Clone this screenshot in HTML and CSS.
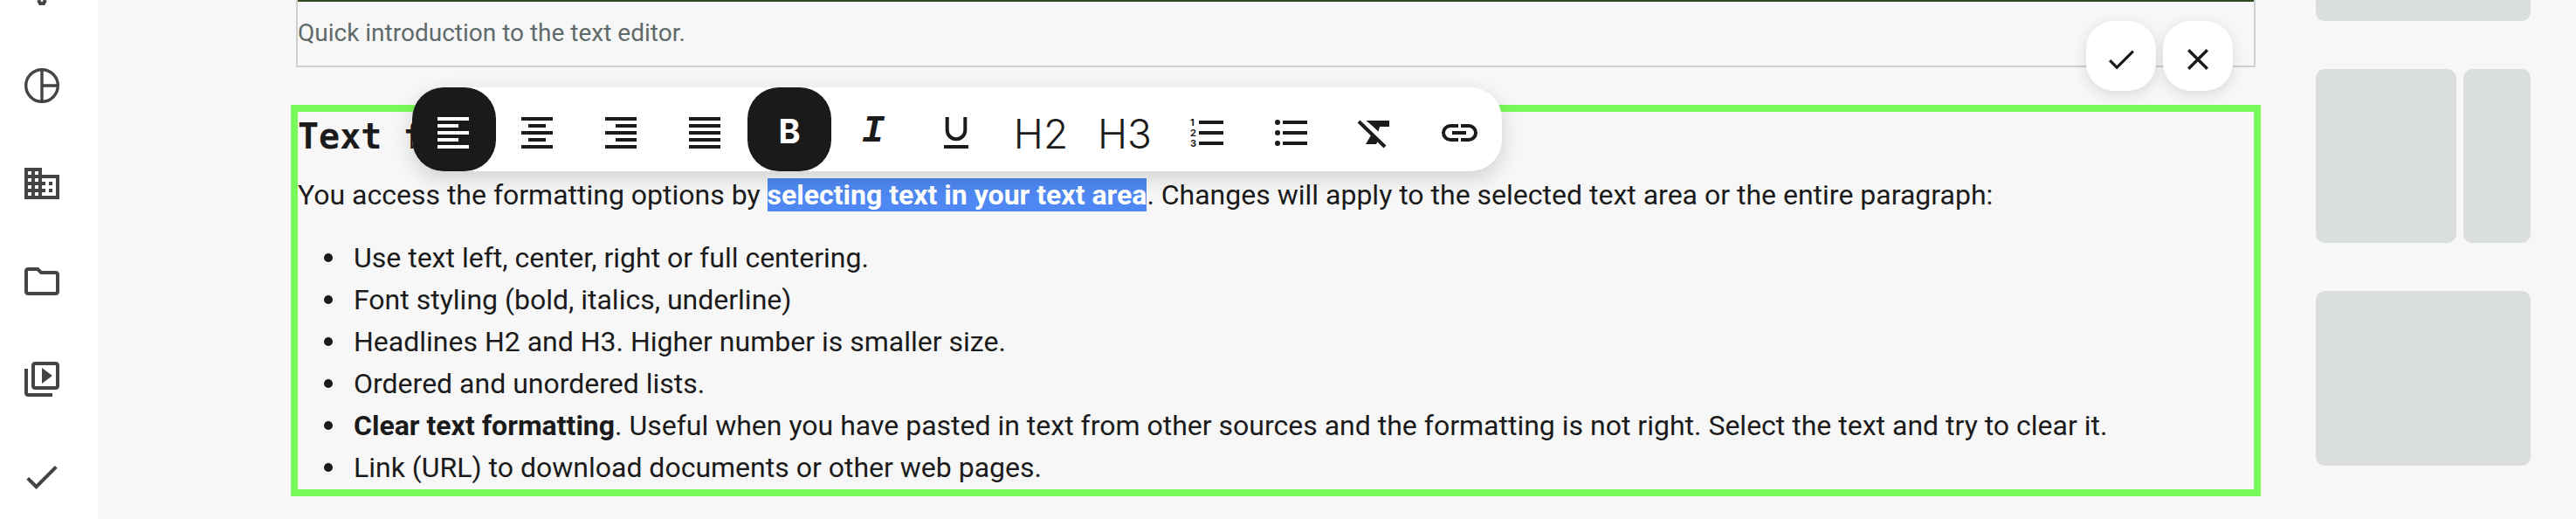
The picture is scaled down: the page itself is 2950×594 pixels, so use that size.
FILE: index.html
```html
<!DOCTYPE html>
<html lang="en">
<head>
<meta charset="utf-8">
<title>Text editor</title>
<link rel="stylesheet" href="styles.css">
</head>
<body>
<div class="app">
  <nav class="rail">
    <svg class="rail-icon top" viewBox="0 0 14 6"><path d="M3 0l2 4h4l2-4" fill="none" stroke="#444" stroke-width="4"/></svg>
    <svg class="rail-icon pie" viewBox="0 0 40 40"><circle cx="20" cy="20" r="18.300" fill="none" stroke="#444" stroke-width="3.400"/><path d="M20 2v36M20 20h18" fill="none" stroke="#444" stroke-width="3.400"/></svg>
    <svg class="rail-icon bld" viewBox="2 3 20 18"><path fill="#444" d="M12 7V3H2v18h20V7H12zM6 19H4v-2h2v2zm0-4H4v-2h2v2zm0-4H4V9h2v2zm0-4H4V5h2v2zm4 12H8v-2h2v2zm0-4H8v-2h2v2zm0-4H8V9h2v2zm0-4H8V5h2v2zm10 12h-8v-2h2v-2h-2v-2h2v-2h-2V9h8v10zm-2-8h-2v2h2v-2zm0 4h-2v2h2v-2z"/></svg>
    <svg class="rail-icon folder" viewBox="2 4 20 16"><path fill="#444" d="M9.170 6l2 2H20v10H4V6h5.170M10 4H4c-1.100 0-1.990.9-1.990 2L2 18c0 1.100.9 2 2 2h16c1.100 0 2-.9 2-2V8c0-1.100-.9-2-2-2h-8l-2-2z"/></svg>
    <svg class="rail-icon media" viewBox="2 2 20 20"><path fill="#444" d="M4 6H2v14c0 1.100.9 2 2 2h14v-2H4V6zm16-4H8c-1.100 0-2 .9-2 2v12c0 1.100.9 2 2 2h12c1.100 0 2-.9 2-2V4c0-1.100-.9-2-2-2zm0 14H8V4h12v12zM12 5.500v9l6-4.500z"/></svg>
    <svg class="rail-icon done" viewBox="3.410 5.590 17.590 13.410"><path fill="#444" d="M9 16.170L4.830 12l-1.420 1.410L9 19 21 7l-1.410-1.410z"/></svg>
  </nav>
  <main class="content">
    <section class="caption-box">
      <p class="caption">Quick introduction to the text editor.</p>
    </section>
    <section class="editor">
      <h2 class="title">Text formatting</h2>
      <p class="intro">You access the formatting options by <span class="sel">selecting text in your text area</span>. Changes will apply to the selected text area or the entire paragraph:</p>
      <ul class="list">
        <li>Use text left, center, right or full centering.</li>
        <li>Font styling (bold, italics, underline)</li>
        <li>Headlines H2 and H3. Higher number is smaller size.</li>
        <li>Ordered and unordered lists.</li>
        <li><b>Clear text formatting</b>. Useful when you have pasted in text from other sources and the formatting is not right. Select the text and try to clear it.</li>
        <li>Link (URL) to download documents or other web pages.</li>
      </ul>
    </section>
    <div class="confirm">
      <button class="round"><svg class="ok" viewBox="3.410 5.590 17.590 13.410"><path fill="#1b1b1b" d="M9 16.170L4.830 12l-1.420 1.410L9 19 21 7l-1.410-1.410z"/></svg></button>
      <button class="round"><svg class="no" viewBox="5 5 14 14"><path fill="#1b1b1b" d="M19 6.410L17.590 5 12 10.590 6.410 5 5 6.410 10.590 12 5 17.590 6.410 19 12 13.410 17.590 19 19 17.590 13.410 12z"/></svg></button>
    </div>
    <div class="toolbar">
      <button class="tool on"><svg viewBox="0 0 48 48"><path d="M5 10h36v4H5zM5 18h24v4H5zM5 26h36v4H5zM5 34h24v4H5zM5 42h36v4H5z"/></svg></button>
      <button class="tool"><svg viewBox="0 0 48 48"><path d="M5 10h36v4H5zM13 18h20v4H13zM5 26h36v4H5zM13 34h20v4H13zM5 42h36v4H5z"/></svg></button>
      <button class="tool"><svg viewBox="0 0 48 48"><path d="M5 10h36v4H5zM17 18h24v4H17zM5 26h36v4H5zM17 34h24v4H17zM5 42h36v4H5z"/></svg></button>
      <button class="tool"><svg viewBox="0 0 48 48"><path d="M5 10h36v4H5zM5 18h36v4H5zM5 26h36v4H5zM5 34h36v4H5zM5 42h36v4H5z"/></svg></button>
      <button class="tool on"><span class="glyph bold">B</span></button>
      <button class="tool"><span class="glyph ital">I</span></button>
      <button class="tool"><svg viewBox="0 0 48 48"><path class="line" d="M12.700 10v15a10.300 10.300 0 0 0 20.600 0V10"/><path d="M9 42h28v4H9z"/></svg></button>
      <button class="tool"><span class="glyph head">H2</span></button>
      <button class="tool"><span class="glyph head">H3</span></button>
      <button class="tool"><svg viewBox="0 0 48 48"><path d="M13 14h28v4H13zM13 26h28v4H13zM13 38h28v4H13z"/><text x="3" y="20" class="tiny">1</text><text x="3" y="32" class="tiny">2</text><text x="3" y="44" class="tiny">3</text></svg></button>
      <button class="tool"><svg viewBox="0 0 48 48"><circle cx="7" cy="16" r="3"/><circle cx="7" cy="28" r="3"/><circle cx="7" cy="40" r="3"/><path d="M13 14h28v4H13zM13 26h28v4H13zM13 38h28v4H13z"/></svg></button>
      <button class="tool"><svg viewBox="0 0 48 48"><path d="M12.500 14H39V21H28L26.500 26.500 20 20.500z"/><path d="M18.500 30L26 37.500 24 41H12z"/><path class="line" d="M4 15l30 29"/></svg></button>
      <button class="tool"><svg viewBox="0 0 48 48"><path class="line" d="M22 20h-9a8 8 0 0 0 0 16h9M25 20h9a8 8 0 0 1 0 16h-9M15 28h16"/></svg></button>
    </div>
  </main>
  <aside class="side">
    <div class="ph ph-top"></div>
    <div class="ph-row"><div class="ph ph-wide"></div><div class="ph ph-narrow"></div></div>
    <div class="ph ph-bottom"></div>
  </aside>
</div>
</body>
</html>
```
FILE: styles.css
```css
* { box-sizing: border-box; }
html, body { margin: 0; height: 594px; overflow: hidden; }
body { font-family: Roboto, "Liberation Sans", sans-serif; color: #1b1b1b; background: #f7f7f7; }
button { border: 0; padding: 0; font: inherit; background: none; }
svg { display: block; }

.app { display: flex; height: 594px; overflow: hidden; }

.rail { flex: 0 0 112px; height: 594px; background: #fff; display: flex; flex-direction: column; padding-left: 28px; }
.rail-icon { flex: none; width: 40px; }
.top { width: 14px; height: 6px; margin-left: 13px; }
.pie { height: 40px; margin-top: 72px; }
.bld { height: 36px; margin-top: 74px; }
.folder { height: 32px; margin-top: 78px; }
.media { height: 40px; margin-top: 76px; }
.done { width: 36px; height: 27px; margin-top: 79px; margin-left: 2px; }

.content { position: relative; flex: 0 0 2477px; padding-left: 221px; }
.caption-box { width: 2244px; height: 77px; margin: 0 0 43px 6px; border: 2px solid #cfcfcf; border-top: 0; }
.caption { margin: 0; height: 75px; padding-top: 20px; border-top: 2px solid #2f4a22; font-size: 28px; line-height: 32px; color: #5f6a6a; }

.editor { width: 2256px; height: 448px; border: 8px solid #78fb5a; }
.title { margin: 0 0 19px; padding-top: 4px; font: 700 40px/48px "DejaVu Sans Mono", monospace; }
.intro { margin: 0; font-size: 32px; line-height: 48px; }
.sel { background: #4f88f2; color: #fff; font-weight: 700; }
.list { margin: 24px 0 0; padding: 0 0 0 64px; font-size: 32px; line-height: 48px; list-style: none; }
.list li { position: relative; }
.list li::before { content: ""; position: absolute; left: -34px; top: 19px; width: 10px; height: 10px; border-radius: 50%; background: #1b1b1b; }

.confirm { position: absolute; top: 24px; left: 2277px; display: flex; gap: 8px; }
.round { width: 80px; height: 80px; padding-top: 8px; background: #fff; border-radius: 32px; display: flex; align-items: center; justify-content: center; box-shadow: 0 4px 16px rgba(0,0,0,.12); }
.ok { width: 29px; height: 23px; }
.no { width: 24px; height: 24px; }

.toolbar { position: absolute; left: 360px; top: 100px; display: flex; height: 96px; background: #fff; border-radius: 36px; box-shadow: 0 8px 24px rgba(0,0,0,.16); }
.tool { width: 96px; height: 96px; display: flex; align-items: center; justify-content: center; border-radius: 36px; }
.tool svg { width: 48px; height: 48px; fill: #1b1b1b; }
.tool.on { background: #1a1a1a; }
.tool.on svg { fill: #fff; }
.tool svg .line { fill: none; stroke: #1b1b1b; stroke-width: 4; }
.glyph { display: block; color: #1b1b1b; line-height: 1; }
.bold { color: #fff; font: 700 38px/1 "Inter", sans-serif; padding-top: 4px; }
.ital { font: italic 700 44px/1 "Liberation Mono", monospace; padding-top: 4px; }
.head { font: 350 46px/1 "Inter", sans-serif; padding-top: 10px; }
.tiny { font: 700 11px "Inter", sans-serif; fill: #1b1b1b; }

.side { flex: 0 0 246px; margin-left: 63px; display: flex; flex-direction: column; }
.ph { background: #dbdedf; border-radius: 10px; }
.ph-top { height: 24px; border-radius: 0 0 10px 10px; }
.ph-row { height: 199px; margin-top: 55px; display: flex; gap: 8px; }
.ph-wide { flex: 0 0 161px; }
.ph-narrow { flex: 1; }
.ph-bottom { height: 200px; margin-top: 55px; }
```
